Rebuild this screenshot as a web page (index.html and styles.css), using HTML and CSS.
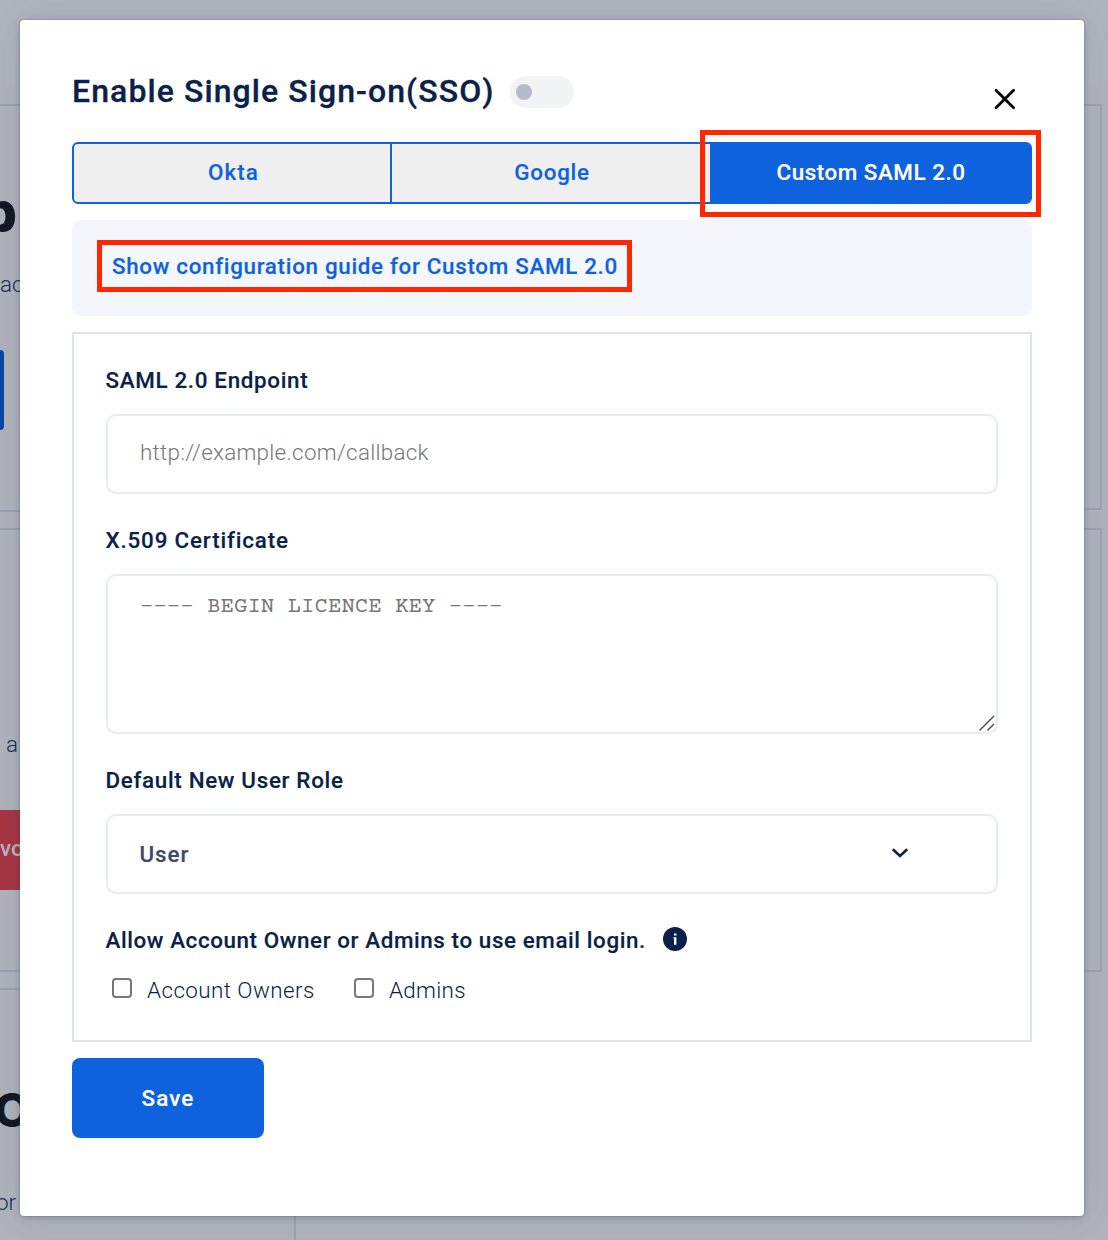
FILE: index.html
```html
<!DOCTYPE html>
<html lang="en">
<head>
<meta charset="utf-8">
<title>Enable Single Sign-on (SSO)</title>
<link rel="stylesheet" href="styles.css">
</head>
<body>
<div class="page">
  <header class="topbar"></header>
  <main class="cards">
    <section class="card card-first">
      <p class="card-title title-p">p</p>
      <p class="card-text text-ac">ac</p>
      <div class="card-button"></div>
    </section>
    <section class="card card-right"></section>
    <section class="card card-second">
      <p class="card-text text-a">a</p>
      <div class="revoke">vo</div>
    </section>
    <section class="card"></section>
    <section class="card card-third">
      <p class="card-title title-o">O</p>
      <p class="card-text text-or">or</p>
    </section>
  </main>
</div>

<div class="modal" role="dialog">
  <header class="modal-head">
    <h1>Enable Single Sign-on(SSO)</h1>
    <span class="toggle"><span class="knob"></span></span>
    <svg class="close" width="24" height="24" viewBox="0 0 24 24"><path d="M3 3.2 20.6 20.8M20.6 3.2 3 20.8" fill="none" stroke="#000" stroke-width="2.8" stroke-linecap="round"/></svg>
  </header>

  <div class="tabs">
    <div class="tab tab-okta">Okta</div>
    <div class="tab tab-google">Google</div>
    <div class="tab tab-active">Custom SAML 2.0</div>
  </div>

  <div class="guide"><span class="guide-link">Show configuration guide for Custom SAML 2.0</span></div>

  <div class="panel">
    <div class="label l-endpoint">SAML 2.0 Endpoint</div>
    <div class="field endpoint">http://example.com/callback</div>
    <div class="label l-cert">X.509 Certificate</div>
    <div class="field cert">---- BEGIN LICENCE KEY ----
      <svg class="grip" width="18" height="18" viewBox="0 0 18 18"><path d="M1.5 16.5 16 2M9.5 16.5 16 10" fill="none" stroke="#555" stroke-width="1.5"/></svg>
    </div>
    <div class="label l-role">Default New User Role</div>
    <div class="field role"><span>User</span>
      <svg width="20" height="12" viewBox="0 0 20 12"><path d="M2.8 2.2 10 9 17.2 2.2" fill="none" stroke="#0b2149" stroke-width="2.6"/></svg>
    </div>
    <div class="label l-allow">Allow Account Owner or Admins to use email login.
      <svg width="24" height="24" viewBox="0 0 24 24"><circle cx="12" cy="12" r="12" fill="#0b2149"/><path d="M11 6.4h2.4v2.2H11zM10.4 10.2h3v7.6H11v-6.4h-.6z" fill="#fff"/></svg>
    </div>
    <div class="checks">
      <span class="box"></span><span class="c-owners">Account Owners</span>
      <span class="box"></span><span class="c-admins">Admins</span>
    </div>
  </div>

  <div class="save">Save</div>
</div>

<div class="mark mark-tab"></div>
<div class="mark mark-guide"></div>
</body>
</html>
```
FILE: styles.css
```css
* { box-sizing: border-box; }
body {
  margin: 0;
  height: 1240px;
  overflow: hidden;
  background: #aeb2bb;
  font-family: Roboto, "Open Sans", sans-serif;
  font-size: 22.4px;
  line-height: 28px;
  color: #0b2149;
}
h1, p { margin: 0; }

/* Dimmed page behind the dialog */
.page { height: 1240px; overflow: hidden; }
.topbar { height: 84px; background: #b0b4bd; }
.cards {
  display: grid;
  grid-template-columns: 304px 1fr;
  grid-template-rows: 408px 444px 270px;
  row-gap: 16px;
  margin-left: -8px;
  padding: 20px 6px 0 0;
  background: #b0b3bb;
}
.card { border: 2px solid #9aa2b2; overflow: hidden; padding-left: 6px; }
.card-right { height: 406px; }
.card-title { font-family: Inter, sans-serif; font-weight: 800; color: #111722; white-space: nowrap; }
.title-p { margin: 77px 0 0 -18px; font-size: 55px; line-height: 56px; letter-spacing: -1px; }
.title-o { margin: 92px 0 0 -6px; font-size: 47px; line-height: 56px; }
.card-text { font-weight: 300; color: #122b55; }
.text-ac { margin-top: 31px; }
.card-button { width: 4px; height: 80px; margin-top: 52px; border-radius: 0 8px 8px 0; background: #0a46a8; }
.text-a { margin: 200px 0 0 6px; }
.revoke {
  width: 200px;
  height: 80px;
  margin-top: 52px;
  background: #a83542;
  color: #b4b8c1;
  font-weight: 500;
  line-height: 77px;
}
.text-or { margin: 50px 0 0 -4px; }

/* Dialog */
.modal {
  position: absolute;
  left: 20px;
  top: 20px;
  width: 1064px;
  height: 1196px;
  padding: 50px 52px 0;
  border-radius: 4px;
  background: #fff;
  box-shadow: 0 0 2px rgba(50, 65, 100, .4), 0 2px 6px rgba(50, 65, 100, .25), 0 0 40px rgba(50, 65, 100, .12);
}
.modal-head { display: flex; align-items: center; height: 44px; }
.modal-head h1 { width: 438px; padding-bottom: 2px; font-size: 32px; font-weight: 500; line-height: 40px; letter-spacing: 1.08px; white-space: nowrap; -webkit-text-stroke: .3px; }
.toggle { width: 64px; height: 32px; padding: 8px 6px; border-radius: 16px; background: #f2f3f5; }
.knob { display: block; width: 16px; height: 16px; border-radius: 50%; background: #b7bbc7; }
.close { margin: 14px 15px 0 auto; }

.tabs { display: flex; height: 62px; margin-top: 28px; border: 2px solid #0f62de; border-radius: 6px; overflow: hidden; background: #efefef; }
.tab { display: flex; align-items: center; justify-content: center; color: #0f62de; font-weight: 500; padding: 0 0 2px 2px; -webkit-text-stroke: .15px; }
.tab-okta { width: 318px; border-right: 2px solid #0f62de; letter-spacing: 1.1px; padding-left: 3px; }
.tab-google { width: 318px; letter-spacing: .75px; }
.tab-active { flex: 1; background: #0f62de; box-shadow: 0 0 0 2px #0f62de; clip-path: inset(-2px -2px -2px 0); color: #fff; letter-spacing: .53px; }

.guide { height: 96px; margin-top: 16px; padding: 32px 40px; border-radius: 8px; background: #f3f6fb; }
.guide-link { color: #0f62de; font-weight: 500; letter-spacing: .68px; white-space: nowrap; -webkit-text-stroke: .15px; }

.panel { height: 710px; margin-top: 16px; padding: 32px; border: 2px solid #dfe3ea; }
.label { height: 28px; margin: 0 0 20px -.5px; font-weight: 500; white-space: nowrap; -webkit-text-stroke: .15px; }
.l-endpoint { letter-spacing: .66px; }
.l-cert { letter-spacing: .83px; }
.l-role { letter-spacing: .67px; }
.l-allow { display: flex; align-items: center; justify-content: space-between; width: 581.5px; margin-bottom: 0; letter-spacing: .59px; }
.l-allow svg { margin-top: -2px; }
.field { height: 80px; margin-bottom: 32px; padding-left: 32px; border: 2px solid #e7ebf6; border-radius: 10px; }
.endpoint { color: #777; font-weight: 300; letter-spacing: .28px; line-height: 72px; }
.cert { position: relative; height: 160px; padding-top: 17px; color: #777; font-family: "Courier Prime", Courier, "Liberation Mono", monospace; }
.grip { position: absolute; right: 0; bottom: 0; }
.role { display: flex; align-items: center; justify-content: space-between; padding: 0 86px 0 31.5px; color: #3c4962; font-weight: 500; letter-spacing: .95px; -webkit-text-stroke: .15px; }
.role svg { margin-top: -2px; }
.checks { display: flex; align-items: center; height: 28px; margin-top: 22px; padding-left: 6px; font-weight: 300; white-space: nowrap; }
.box { width: 20px; height: 20px; margin: 0 15px 4px 0; border: 2px solid #767676; border-radius: 4px; }
.c-owners { width: 207px; letter-spacing: .43px; }
.c-admins { letter-spacing: .3px; }

.save { width: 192px; height: 80px; margin-top: 16px; border-radius: 8px; background: #0f62de; color: #fff; font-weight: 500; letter-spacing: 1.1px; line-height: 80px; text-align: center; -webkit-text-stroke: .15px; }

/* Callout frames over the dialog */
.mark { position: absolute; border: 5px solid #ff2600; }
.mark-tab { left: 700px; top: 130px; width: 341px; height: 87px; }
.mark-guide { left: 97px; top: 240px; width: 535px; height: 52px; }
```
